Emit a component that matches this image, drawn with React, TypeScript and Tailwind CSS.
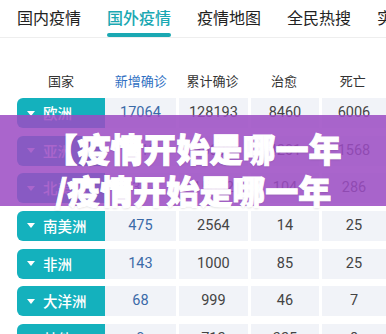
import React from 'react';

const tabs = ['国内疫情', '国外疫情', '疫情地图', '全民热搜', '实时动态'];

const rows = [
    { name: '欧洲', add: '17064', total: '128193', cure: '8460', dead: '6006' },
    { name: '亚洲', add: '3519', total: '95632', cure: '4201', dead: '1568' },
    { name: '北美洲', add: '5367', total: '15632', cure: '104', dead: '286' },
    { name: '南美洲', add: '475', total: '2564', cure: '14', dead: '25' },
    { name: '非洲', add: '143', total: '1000', cure: '85', dead: '25' },
    { name: '大洋洲', add: '68', total: '999', cure: '46', dead: '7' },
    { name: '其他', add: '0', total: '712', cure: '325', dead: '8' },
];

const cjk = { fontFamily: '"Noto Sans CJK SC", "Noto Sans", sans-serif' };
const num = { fontFamily: 'Roboto, "Noto Sans CJK SC", sans-serif' };

export default function App() {
    return (
        <div className="relative w-[386px] h-[334px] overflow-hidden bg-white" style={cjk}>
            {/* Tabs */}
            <div className="flex h-[38px] gap-[26px] pl-[17px] border-b border-[#eeeeee] whitespace-nowrap">
                {tabs.map((t, i) => (
                    <div key={t} className="flex flex-col shrink-0">
                        <span
                            className={
                                i === 1
                                    ? 'pt-[5px] text-[16px] leading-[24px] font-medium text-[#1aa8b2]'
                                    : 'pt-[5px] text-[16px] leading-[24px] text-[#222222]'
                            }
                        >
                            {t}
                        </span>
                        <div className={i === 1 ? 'mt-[4px] h-[4px] rounded-full bg-[#1aa8b2]' : 'mt-[4px] h-[4px]'} />
                    </div>
                ))}
            </div>

            {/* Table */}
            <div className="pt-[28px] pl-[17px]">
                <div className="flex h-[30px] items-center text-[13px] text-[#333333] mb-[2px]">
                    <div className="w-[89px] text-center">国家</div>
                    <div className="w-[72px] text-center text-[#2f6fc2]">新增确诊</div>
                    <div className="w-[73px] text-center">累计确诊</div>
                    <div className="w-[72px] text-center">治愈</div>
                    <div className="w-[67px] text-center">死亡</div>
                </div>

                <div className="flex flex-col gap-[7.67px]">
                    {rows.map((r) => (
                        <div key={r.name} className="flex h-[30px] shrink-0">
                            <div className="w-[89px] flex items-center gap-[8px] pl-[10px] rounded-l-[6px] bg-[#14b1bd] text-white text-[14.5px] font-medium">
                                <span className="w-0 h-0 border-l-[4px] border-r-[4px] border-t-[5px] border-l-transparent border-r-transparent border-t-white" />
                                {r.name}
                            </div>
                            <div className="w-[72px] flex items-center justify-center bg-[#f1f3f8] text-[14.5px] text-[#3b6aa8]" style={num}>
                                {r.add}
                            </div>
                            <div className="ml-[3px] w-[70px] flex items-center justify-center bg-[#f1f3f8] text-[14.5px] text-[#444444]" style={num}>
                                {r.total}
                            </div>
                            <div className="ml-[3px] w-[69px] flex items-center justify-center bg-[#f1f3f8] text-[14.5px] text-[#444444]" style={num}>
                                {r.cure}
                            </div>
                            <div className="ml-[3px] w-[64px] shrink-0 flex items-center justify-center bg-[#f1f3f8] text-[14.5px] text-[#444444]" style={num}>
                                {r.dead}
                            </div>
                        </div>
                    ))}
                </div>
            </div>

            {/* Title banner overlay */}
            <div className="absolute left-0 right-0 top-[115px] h-[91px] bg-[#9c4cc4]/[0.86]" />
            <div className="absolute left-0 right-0 top-[127px] text-center text-white font-black text-[33px] leading-[42px] [-webkit-text-stroke:1px_white] [text-shadow:0_1px_2px_rgba(0,0,0,0.15)]">
                <div>【疫情开始是哪一年</div>
                <div>/疫情开始是哪一年</div>
            </div>
        </div>
    );
}
